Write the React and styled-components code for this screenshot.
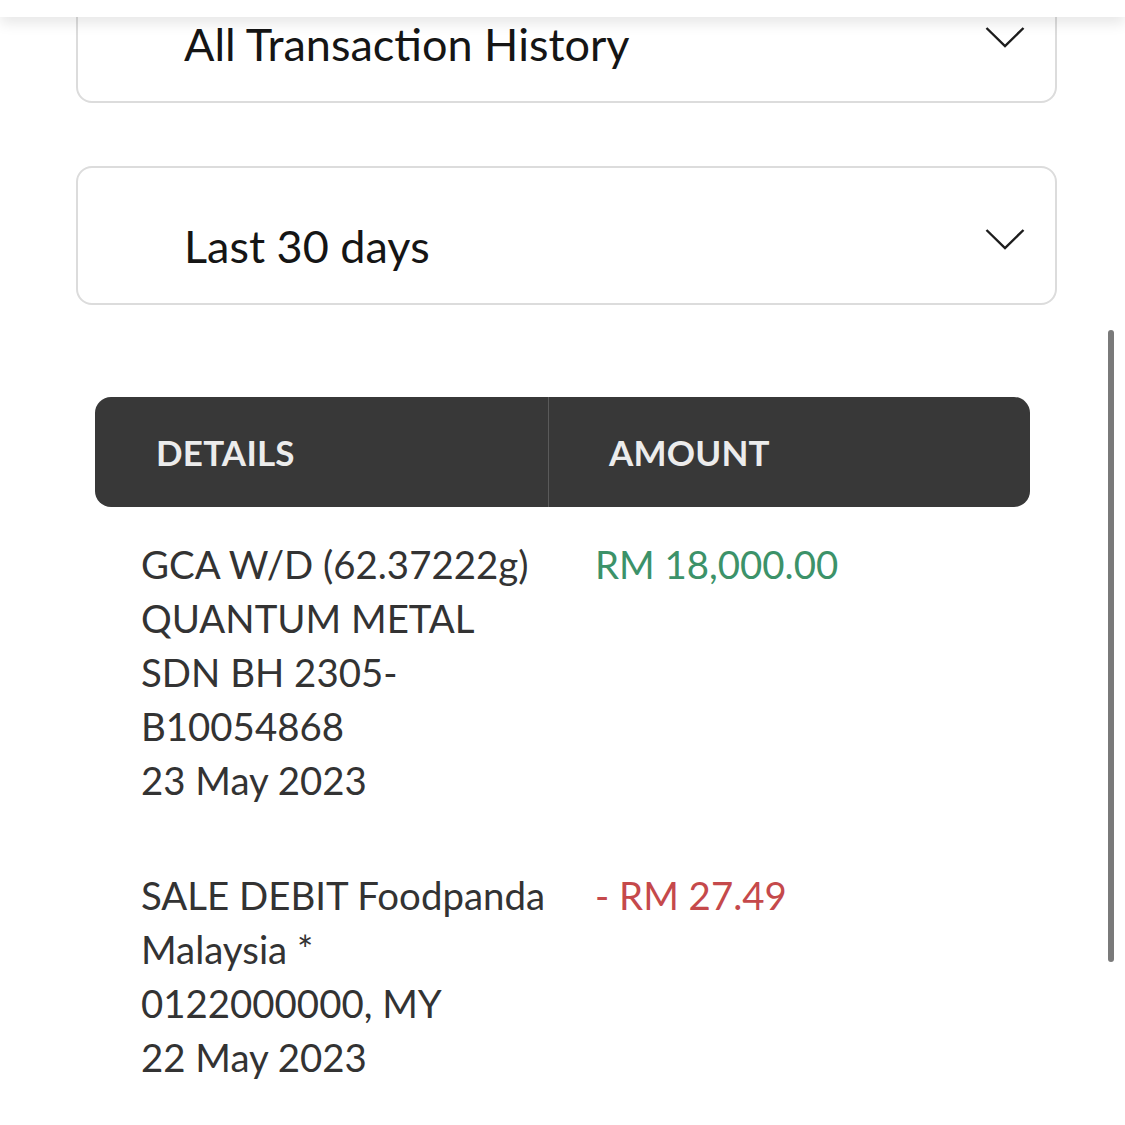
import React from 'react';
import styled, { createGlobalStyle } from 'styled-components';

const GlobalStyle = createGlobalStyle`
  html, body {
    margin: 0;
    padding: 0;
    background: #ffffff;
    font-family: Lato, "Open Sans", sans-serif;
    overflow: hidden;
  }
`;

const TopBar = styled.div`
  position: fixed;
  top: 0;
  left: 0;
  right: 0;
  height: 17px;
  background: #ffffff;
  box-shadow: 0 6px 14px rgba(0, 0, 0, 0.1);
  z-index: 5;
`;

const ScrollThumb = styled.div`
  position: fixed;
  top: 330px;
  right: 11px;
  width: 6px;
  height: 632px;
  border-radius: 3px;
  background: #7a7a7a;
  z-index: 5;
`;

const Page = styled.div`
  display: flex;
  flex-direction: column;
  padding: 0 68px 0 76px;
  margin-top: -36px;
`;

const Select = styled.div`
  box-sizing: border-box;
  height: 139px;
  border: 2px solid #dcdcdc;
  border-radius: 16px;
  display: flex;
  align-items: center;
  justify-content: space-between;
  padding: 20px 30px 0 106px;
  margin-bottom: ${(props) => props.gap || 0}px;
`;

const SelectText = styled.span`
  font-size: 45px;
  color: #151515;
  letter-spacing: 0;
`;

const Chevron = styled.svg`
  width: 40px;
  height: 22px;
  margin-bottom: 14px;
`;

const Table = styled.div`
  margin: 0 27px 0 19px;
`;

const HeadRow = styled.div`
  display: grid;
  grid-template-columns: 453px 1fr;
  height: 110px;
  background: #383838;
  border-radius: 16px;
  overflow: hidden;
`;

const HeadCell = styled.div`
  display: flex;
  align-items: center;
  padding-left: ${(props) => props.pad}px;
  color: #ececec;
  font-size: 35px;
  font-weight: 700;
  letter-spacing: 0.2px;
  border-left: ${(props) => (props.divider ? '1px solid #5a5a5a' : 'none')};
`;

const Rows = styled.div`
  display: flex;
  flex-direction: column;
  gap: 61px;
  padding: 30px 0 0 46px;
`;

const Row = styled.div`
  display: grid;
  grid-template-columns: 420px 1fr;
  column-gap: 34px;
  font-size: 38.4px;
  line-height: 54px;
`;

const Details = styled.div`
  color: #333333;
`;

const Amount = styled.div`
  color: ${(props) => (props.debit ? '#c5494b' : '#3c9269')};
`;

const transactions = [
  {
    lines: ['GCA W/D (62.37222g)', 'QUANTUM METAL', 'SDN BH 2305-', 'B10054868', '23 May 2023'],
    amount: 'RM 18,000.00',
    debit: false,
  },
  {
    lines: ['SALE DEBIT Foodpanda', 'Malaysia *', '0122000000, MY', '22 May 2023'],
    amount: '- RM 27.49',
    debit: true,
  },
];

function Arrow() {
  return (
    <Chevron viewBox="0 0 40 22">
      <path d="M1.5 2 L20 20 L38.5 2" fill="none" stroke="#1d1d1d" strokeWidth="2.4" />
    </Chevron>
  );
}

export default function App() {
  return (
    <>
      <GlobalStyle />
      <TopBar />
      <ScrollThumb />
      <Page>
        <Select gap={63}>
          <SelectText>All Transaction History</SelectText>
          <Arrow />
        </Select>
        <Select gap={92}>
          <SelectText>Last 30 days</SelectText>
          <Arrow />
        </Select>
        <Table>
          <HeadRow>
            <HeadCell pad={61}>DETAILS</HeadCell>
            <HeadCell pad={60} divider>
              AMOUNT
            </HeadCell>
          </HeadRow>
          <Rows>
            {transactions.map((t) => (
              <Row key={t.amount}>
                <Details>
                  {t.lines.map((l) => (
                    <div key={l}>{l}</div>
                  ))}
                </Details>
                <Amount debit={t.debit}>{t.amount}</Amount>
              </Row>
            ))}
          </Rows>
        </Table>
      </Page>
    </>
  );
}
